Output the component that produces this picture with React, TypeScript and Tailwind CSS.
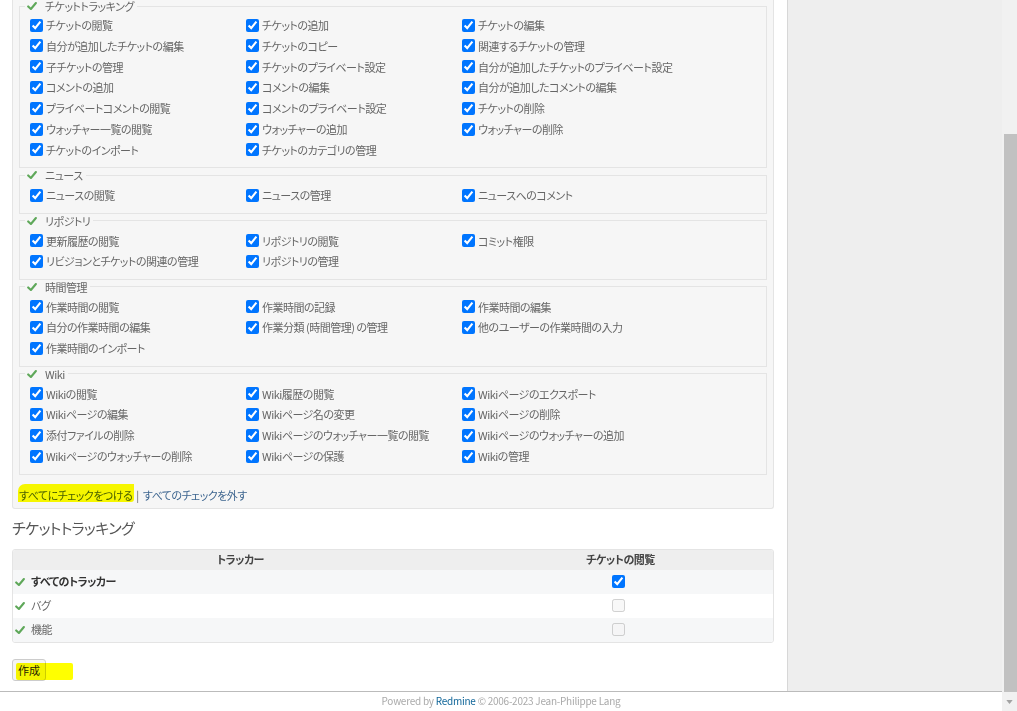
const FONT = "font-['Noto_Sans_CJK_JP',sans-serif] [font-feature-settings:'palt']";

type Group = { title: string; items: string[] };

const groups: Group[] = [
  {
    title: "チケットトラッキング",
    items: [
      "チケットの閲覧",
      "チケットの追加",
      "チケットの編集",
      "自分が追加したチケットの編集",
      "チケットのコピー",
      "関連するチケットの管理",
      "子チケットの管理",
      "チケットのプライベート設定",
      "自分が追加したチケットのプライベート設定",
      "コメントの追加",
      "コメントの編集",
      "自分が追加したコメントの編集",
      "プライベートコメントの閲覧",
      "コメントのプライベート設定",
      "チケットの削除",
      "ウォッチャー一覧の閲覧",
      "ウォッチャーの追加",
      "ウォッチャーの削除",
      "チケットのインポート",
      "チケットのカテゴリの管理",
    ],
  },
  { title: "ニュース", items: ["ニュースの閲覧", "ニュースの管理", "ニュースへのコメント"] },
  {
    title: "リポジトリ",
    items: ["更新履歴の閲覧", "リポジトリの閲覧", "コミット権限", "リビジョンとチケットの関連の管理", "リポジトリの管理"],
  },
  {
    title: "時間管理",
    items: [
      "作業時間の閲覧",
      "作業時間の記録",
      "作業時間の編集",
      "自分の作業時間の編集",
      "作業分類 (時間管理) の管理",
      "他のユーザーの作業時間の入力",
      "作業時間のインポート",
    ],
  },
  {
    title: "Wiki",
    items: [
      "Wikiの閲覧",
      "Wiki履歴の閲覧",
      "Wikiページのエクスポート",
      "Wikiページの編集",
      "Wikiページ名の変更",
      "Wikiページの削除",
      "添付ファイルの削除",
      "Wikiページのウォッチャー一覧の閲覧",
      "Wikiページのウォッチャーの追加",
      "Wikiページのウォッチャーの削除",
      "Wikiページの保護",
      "Wikiの管理",
    ],
  },
];

const trackers = [
  { name: "すべてのトラッカー", bold: true, checked: true },
  { name: "バグ", bold: false, checked: false },
  { name: "機能", bold: false, checked: false },
];

function Tick({ className = "" }: { className?: string }) {
  return (
    <svg viewBox="0 0 10 10" className={`h-[10px] w-[10px] shrink-0 ${className}`}>
      <path d="M1.2 5.4 L3.9 8 L8.9 2" fill="none" stroke="#5fa85a" strokeWidth="2.1" strokeLinecap="round" strokeLinejoin="round" />
    </svg>
  );
}

function Box({ checked, disabled }: { checked: boolean; disabled?: boolean }) {
  return (
    <input
      type="checkbox"
      defaultChecked={checked}
      disabled={disabled}
      className="m-0 h-[13px] w-[13px] shrink-0 accent-[#0075ff]"
    />
  );
}

function PermissionGroup({ group, first }: { group: Group; first?: boolean }) {
  return (
    <fieldset className={`border border-[#e4e4e4] ${first ? "-mt-[1px]" : ""}`}>
      <legend className="ml-[5px] pr-[3px]">
        <span className="flex h-[14px] items-center leading-[14px]">
          <Tick className="ml-[2px] mr-[8px]" />
          {group.title}
        </span>
      </legend>
      <div className={`grid grid-cols-[216px_216px_216px] pb-[7px] pl-[10px] ${first ? "pt-[1.8px]" : "pt-[2.6px]"}`}>
        {group.items.map((item) => (
          <label key={item} className="flex h-[20.8px] items-center whitespace-nowrap">
            <Box checked />
            <span className="ml-[3px]">{item}</span>
          </label>
        ))}
      </div>
    </fieldset>
  );
}

export default function App() {
  return (
    <div className={`flex h-[711px] w-[1017px] overflow-hidden bg-white text-[11px] tracking-[-0.5px] text-[#666666] ${FONT}`}>
      <div className="flex w-[1002px] flex-col">
        <div className="flex h-[691px] shrink-0">
          <main className="w-[787px] shrink-0 overflow-hidden pl-[12px] pr-[13px]">
            <div className="mb-[10px] rounded-b-[3px] border border-t-0 border-[#e4e4e4] bg-[#f6f6f6] px-[6px] pb-[4px]">
              {groups.map((g, i) => (
                <PermissionGroup key={g.title} group={g} first={i === 0} />
              ))}
              <p className="mt-[11px] flex items-center leading-[18px]">
                <span className="relative">
                  <span className="absolute -left-[1px] -top-[2px] h-[18px] w-[116px] rounded-tl-[7px] rounded-br-[3px] bg-[#ffff00] mix-blend-multiply" />
                  <a className="text-[#4a6078]">すべてにチェックをつける</a>
                </span>
                <span className="mx-[4px] text-[#666666]">|</span>
                <a className="text-[#3e6690]">すべてのチェックを外す</a>
              </p>
            </div>

            <h3 className="text-[15px] leading-[18px] tracking-[-0.6px] text-[#555]">チケットトラッキング</h3>

            <div className="mt-[12px] overflow-hidden rounded-[3px] border border-[#e4e4e4]">
              <div className="grid h-[20px] grid-cols-[455px_1fr] items-center bg-[#eeeeee] font-bold text-[#444]">
                <div className="text-center">トラッカー</div>
                <div className="text-center">チケットの閲覧</div>
              </div>
              {trackers.map((t, i) => (
                <div
                  key={t.name}
                  className={`grid h-[24px] grid-cols-[455px_1fr] items-center ${i % 2 === 0 ? "bg-[#f6f7f8]" : "bg-white"}`}
                >
                  <div className={`flex items-center pl-[2px] ${t.bold ? "font-bold text-[#333]" : ""}`}>
                    <Tick className="mr-[6px]" />
                    {t.name}
                  </div>
                  <div className="flex justify-center pr-[4px]">
                    <Box checked={t.checked} disabled={!t.checked} />
                  </div>
                </div>
              ))}
            </div>

            <div className="relative mt-[16px] w-fit">
              <button className="h-[22px] rounded-[3px] border border-[#cccccc] bg-[#f4f4f4] px-[5px] text-[11px] leading-[20px] tracking-normal text-[#222]">
                作成
              </button>
              <span className="absolute left-[4px] top-[4px] h-[17px] w-[57px] rounded-[2px] bg-[#ffff00] mix-blend-multiply" />
            </div>
          </main>
          <aside className="flex-1 border-l border-[#d7d7d7] bg-[#eeeeee]" />
        </div>
        <footer className="h-[20px] shrink-0 border-t border-[#bbbbbb] text-center text-[10px] leading-[18px] tracking-[-0.25px] text-[#aaaaaa]">
          Powered by <a className="text-[#169]">Redmine</a> © 2006-2023 Jean-Philippe Lang
        </footer>
      </div>
      <div className="flex w-[15px] flex-col bg-[#f1f1f1]">
        <div className="ml-[2px] mt-[134px] h-[558px] w-[13px] bg-[#c1c1c1]" />
        <div className="flex flex-1 items-center justify-center">
          <svg viewBox="0 0 8 5" className="h-[4px] w-[7px]">
            <path d="M0 0 L8 0 L4 5 Z" fill="#a3a3a3" />
          </svg>
        </div>
      </div>
    </div>
  );
}
